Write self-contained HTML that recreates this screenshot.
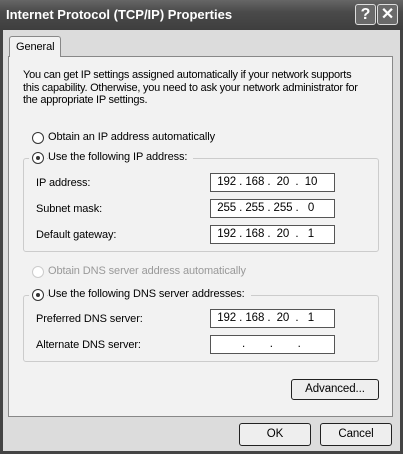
<!DOCTYPE html><html><head><style>
*{margin:0;padding:0;box-sizing:border-box}
body{width:403px;height:454px;overflow:hidden;background:#fff;font-family:"Liberation Sans",sans-serif;font-size:11px;color:#000;letter-spacing:-0.1px}
.win{position:absolute;left:0;top:0;width:403px;height:454px;background:#444;}
.title{position:absolute;left:0;top:0;width:403px;height:30px;background:linear-gradient(#666,#4a4a4a 40%,#3e3e3e);}
.title span{position:absolute;left:6px;top:7px;color:#fff;font-weight:bold;font-size:13px;letter-spacing:0}
.tb{position:absolute;top:4px;width:21px;height:21px;border:1px solid #ddd;border-radius:3px;background:#6a6a6a;color:#fff;font-weight:bold;font-size:16px;text-align:center;line-height:19px}
.body{position:absolute;left:3px;top:30px;width:397px;height:421px;background:#dcdcdc;}
.panel{position:absolute;left:5px;top:26px;width:385px;height:361px;background:#f2f2f2;border:1px solid #888;}
.tab{position:absolute;left:6px;top:6px;width:52px;height:21px;background:#f2f2f2;border:1px solid #888;border-bottom:none;border-radius:3px 3px 0 0;padding:4px 0 0 6px;z-index:2}
.a{position:absolute;white-space:nowrap}
.radio{position:absolute;width:12px;height:12px;border:1px solid #333;border-radius:50%;background:#fff}
.radio.on::after{content:"";position:absolute;left:3px;top:3px;width:4px;height:4px;border-radius:50%;background:#333}
.grp{position:absolute;border:1px solid #ccc;border-radius:3px}
.box{position:absolute;width:125px;height:19px;border:1px solid #555;background:#fff;font-size:11.5px;padding-top:2px;white-space:pre}
.btn{position:absolute;border:1px solid #222;border-radius:3px;background:#eee;text-align:center;font-size:11.5px}
</style></head><body>
<div class="win">
<div class="title"><span>Internet Protocol (TCP/IP) Properties</span>
<div class="tb" style="left:355px">?</div><div class="tb" style="left:377px">✕</div></div>
<div class="body">
<div class="tab">General</div>
<div class="panel"></div>
</div>
<div class="a" style="left:23px;top:69px;line-height:12.5px;font-size:11px;letter-spacing:-0.25px">You can get IP settings assigned automatically if your network supports<br>this capability. Otherwise, you need to ask your network administrator for<br>the appropriate IP settings.</div>
<div class="radio" style="left:32px;top:132px"></div><div class="a" style="left:48px;top:131px">Obtain an IP address automatically</div>
<div class="grp" style="left:23px;top:158px;width:356px;height:94px"></div>
<div class="radio on" style="left:32px;top:152px;box-shadow:0 0 0 3px #f2f2f2"></div><div class="a" style="left:48px;top:151px;background:#f2f2f2;padding-right:6px">Use the following IP address:</div>
<div class="a" style="left:36px;top:177px">IP address:</div><div class="box" style="left:210px;top:173px">  192 . 168 .  20  .  10</div>
<div class="a" style="left:36px;top:203px">Subnet mask:</div><div class="box" style="left:210px;top:199px">  255 . 255 . 255 .   0</div>
<div class="a" style="left:36px;top:229px">Default gateway:</div><div class="box" style="left:210px;top:225px">  192 . 168 .  20  .   1</div>
<div class="radio" style="left:32px;top:266px;border-color:#ccc"></div><div class="a" style="left:48px;top:265px;color:#999">Obtain DNS server address automatically</div>
<div class="grp" style="left:23px;top:295px;width:356px;height:67px"></div>
<div class="radio on" style="left:32px;top:289px;box-shadow:0 0 0 3px #f2f2f2"></div><div class="a" style="left:48px;top:288px;background:#f2f2f2;padding-right:6px">Use the following DNS server addresses:</div>
<div class="a" style="left:36px;top:313px">Preferred DNS server:</div><div class="box" style="left:210px;top:309px">  192 . 168 .  20  .   1</div>
<div class="a" style="left:36px;top:339px">Alternate DNS server:</div><div class="box" style="left:210px;top:335px">          .        .        .</div>
<div class="btn" style="left:291px;top:379px;width:88px;height:21px;line-height:19px">Advanced...</div>
<div class="btn" style="left:239px;top:423px;width:72px;height:23px;line-height:21px">OK</div>
<div class="btn" style="left:320px;top:423px;width:72px;height:23px;line-height:21px">Cancel</div>
</div>
</body></html>
